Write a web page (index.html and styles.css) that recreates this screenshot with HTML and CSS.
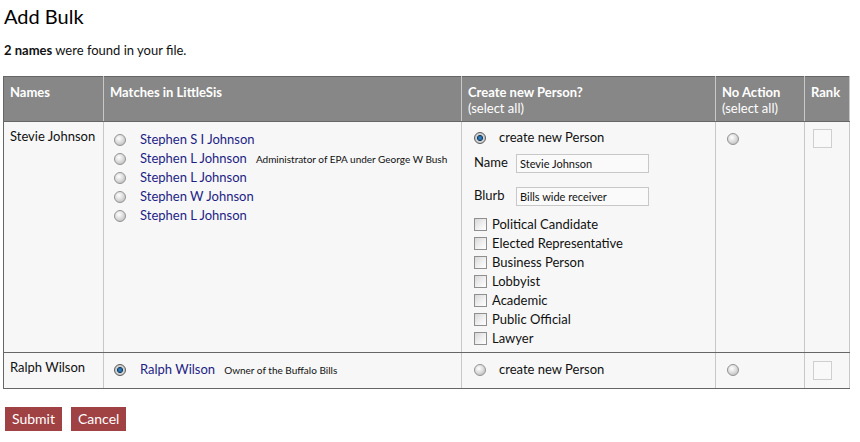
FILE: index.html
```html
<!DOCTYPE html>
<html>
<head>
<meta charset="utf-8">
<link rel="stylesheet" href="styles.css">
</head>
<body>
<h1 class="title">Add Bulk</h1>
<p class="summary"><b>2 names</b> were found in your file.</p>
<table class="bulk">
  <colgroup>
    <col class="w-name">
    <col class="w-match">
    <col class="w-create">
    <col class="w-none">
    <col class="w-rank">
  </colgroup>
  <thead>
    <tr>
      <th class="c-name">Names</th>
      <th class="c-match">Matches in LittleSis</th>
      <th class="c-create">Create new Person?<br><span class="sel">(select all)</span></th>
      <th class="c-none">No Action<br><span class="sel">(select all)</span></th>
      <th class="c-rank">Rank</th>
    </tr>
  </thead>
  <tbody>
    <tr>
      <td class="c-name">Stevie Johnson</td>
      <td class="c-match">
        <div class="opt"><span class="radio"></span><a class="ent">Stephen S I Johnson</a></div>
        <div class="opt"><span class="radio"></span><a class="ent">Stephen L Johnson</a><span class="blurb">Administrator of EPA under George W Bush</span></div>
        <div class="opt"><span class="radio"></span><a class="ent">Stephen L Johnson</a></div>
        <div class="opt"><span class="radio"></span><a class="ent">Stephen W Johnson</a></div>
        <div class="opt"><span class="radio"></span><a class="ent">Stephen L Johnson</a></div>
      </td>
      <td class="c-create">
        <div class="opt"><span class="radio on"></span><span class="cnp">create new Person</span></div>
        <div class="field f-name"><span class="lbl">Name</span><span class="inp">Stevie Johnson</span></div>
        <div class="field f-blurb"><span class="lbl">Blurb</span><span class="inp">Bills wide receiver</span></div>
        <div class="types">
          <div class="chk"><span class="box"></span>Political Candidate</div>
          <div class="chk"><span class="box"></span>Elected Representative</div>
          <div class="chk"><span class="box"></span>Business Person</div>
          <div class="chk"><span class="box"></span>Lobbyist</div>
          <div class="chk"><span class="box"></span>Academic</div>
          <div class="chk"><span class="box"></span>Public Official</div>
          <div class="chk"><span class="box"></span>Lawyer</div>
        </div>
      </td>
      <td class="c-none"><div class="opt"><span class="radio"></span></div></td>
      <td class="c-rank"><span class="rankbox"></span></td>
    </tr>
    <tr class="r2">
      <td class="c-name">Ralph Wilson</td>
      <td class="c-match">
        <div class="opt"><span class="radio on"></span><a class="ent">Ralph Wilson</a><span class="blurb">Owner of the Buffalo Bills</span></div>
      </td>
      <td class="c-create"><div class="opt"><span class="radio"></span><span class="cnp">create new Person</span></div></td>
      <td class="c-none"><div class="opt"><span class="radio"></span></div></td>
      <td class="c-rank"><span class="rankbox"></span></td>
    </tr>
  </tbody>
</table>
<div class="actions">
  <button class="btn">Submit</button>
  <button class="btn">Cancel</button>
</div>
</body>
</html>
```
FILE: styles.css
```css
html, body {
  margin: 0;
  padding: 0;
  background: #fff;
}
body {
  font-family: Lato, "Open Sans", sans-serif;
  color: #111;
  font-size: 13px;
  padding: 0 3px;
}
.title {
  font-size: 20px;
  font-weight: 400;
  line-height: 24px;
  margin: 4px 0 0 1px;
  color: #000;
}
.summary {
  font-size: 13px;
  line-height: 16px;
  margin: 14px 0 18px 1px;
  color: #111;
}
.summary b { font-weight: 700; }
.bulk {
  border-collapse: collapse;
  width: 846px;
  table-layout: fixed;
}
.w-name { width: 100px; }
.w-match { width: 358px; }
.w-create { width: 254px; }
.w-none { width: 89px; }
.w-rank { width: 45px; }
.bulk th {
  background: #878787;
  color: #fff;
  font-weight: 700;
  font-size: 13px;
  line-height: 16px;
  text-align: left;
  vertical-align: top;
  padding: 7px 4px 5px 6px;
  border-top: 1px solid #666;
  border-bottom: 1px solid #666;
  border-left: 1px solid #c8c8c8;
  border-right: 1px solid #c8c8c8;
}
.bulk th .sel { font-weight: 400; }
.bulk th.c-name { border-left: 1px solid #666; }
.bulk td {
  background: #f7f7f7;
  vertical-align: top;
  border-left: 1px solid #c8c8c8;
  border-right: 1px solid #c8c8c8;
  border-bottom: 1px solid #666;
  padding: 0;
}
.bulk td.c-name { border-left: 1px solid #666; }

td.c-name {
  padding: 5px 4px 0 6px;
  line-height: 19px;
}
td.c-match { padding: 8px 0 0 10px; }
td.c-create { padding: 6px 0 4px 12px; }
td.c-none { padding: 7px 0 0 11px; }
td.c-rank { padding: 7px 0 0 8px; }

.opt {
  display: flex;
  align-items: center;
  height: 19px;
  line-height: 19px;
  white-space: nowrap;
}
.radio {
  width: 12px;
  height: 12px;
  border-radius: 50%;
  box-sizing: border-box;
  border: 1px solid #949494;
  background: radial-gradient(circle at 40% 35%, #ffffff 0%, #dedede 45%, #b2b2b2 100%);
  flex: none;
}
.radio.on {
  border-color: #5e5e5e;
  background: radial-gradient(circle at 50% 50%, #3a8ccc 0%, #1c5c94 30%, #0d3355 38%, #d6d6d6 46%, #b4b4b4 100%);
}
td.c-match .radio { margin-right: 14px; }
.ent {
  color: #1e1e86;
  font-size: 13px;
  text-decoration: none;
}
.blurb {
  font-size: 10px;
  color: #111;
  margin-left: 9px;
  padding-top: 2px;
}
.cnp {
  margin-left: 13px;
  color: #111;
}
.field {
  display: flex;
  align-items: flex-start;
}
.f-name { margin-top: 7px; }
.f-blurb { margin-top: 14px; }
.lbl {
  width: 42px;
  flex: none;
  line-height: 16px;
}
.inp {
  display: block;
  box-sizing: border-box;
  width: 133px;
  height: 19px;
  border: 1px solid #c8c8c8;
  background: #fafafa;
  font-size: 11px;
  line-height: 17px;
  padding: 0 3px;
  color: #111;
  white-space: nowrap;
}
.types { margin-top: 9px; }
.chk {
  display: flex;
  align-items: center;
  height: 19px;
  line-height: 19px;
  white-space: nowrap;
}
.box {
  width: 13px;
  height: 13px;
  box-sizing: border-box;
  border: 1px solid #8f8f8f;
  background: linear-gradient(135deg, #d8d8d8 0%, #f2f2f2 60%, #ffffff 100%);
  margin-right: 5px;
  flex: none;
}
.rankbox {
  display: block;
  width: 19px;
  height: 19px;
  box-sizing: border-box;
  border: 1px solid #cfcfcf;
  background: #f9f9f9;
}
.r2 td.c-name { padding-top: 5px; }
.r2 td.c-match { padding-top: 7px; padding-bottom: 9px; }
.r2 td.c-create { padding-top: 7px; }
.r2 td.c-none { padding-top: 7px; }
.r2 td.c-rank { padding-top: 8px; }

.actions {
  display: flex;
  gap: 9px;
  margin: 18px 0 0 2px;
}
.btn {
  font-family: Lato, "Open Sans", sans-serif;
  font-size: 14px;
  color: #fff;
  background: #a04143;
  border: none;
  height: 24px;
  padding: 0 7px;
  line-height: 24px;
}
```
